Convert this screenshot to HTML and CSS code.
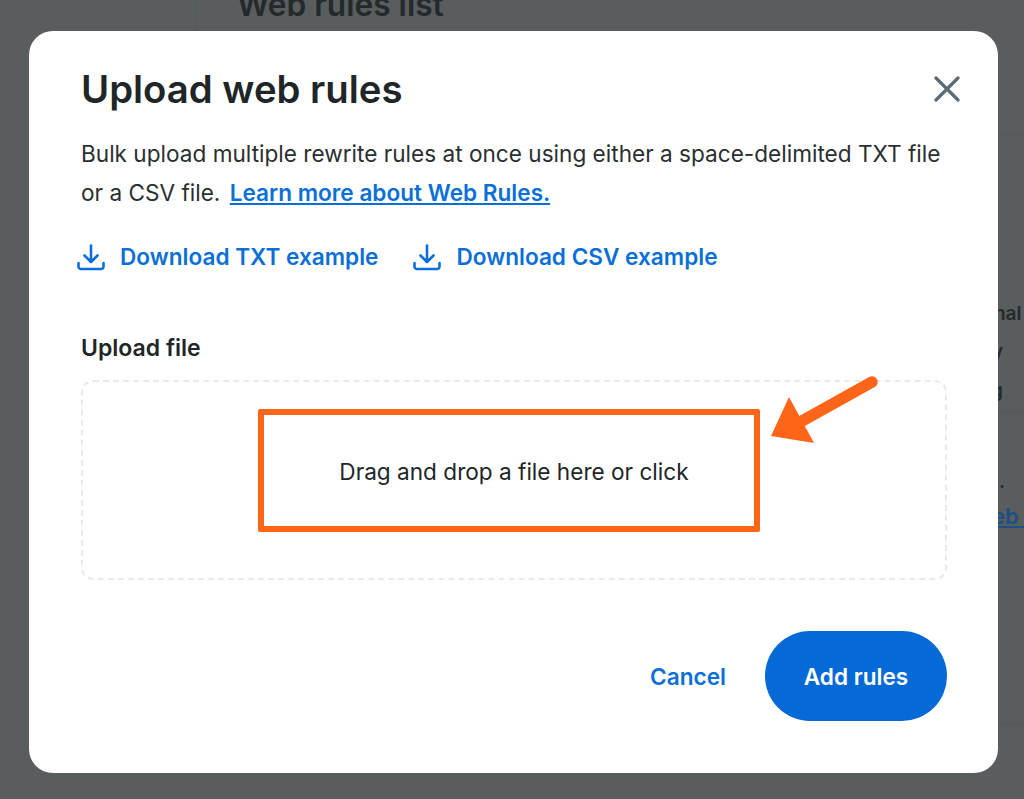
FILE: index.html
```html
<!DOCTYPE html>
<html lang="en">
<head>
<meta charset="utf-8">
<title>Upload web rules</title>
<link rel="stylesheet" href="styles.css">
</head>
<body>
<div class="page">
  <div class="page-divider"></div>
  <h2 class="page-title">Web rules list</h2>
  <div class="bg-line line-b"></div>
  <div class="bg-frag frag-nal">nal</div>
  <div class="bg-frag frag-y">y</div>
  <div class="bg-frag frag-g">g</div>
  <div class="bg-line line-a"></div>
  <div class="bg-frag frag-dot">.</div>
  <div class="bg-frag frag-eb">eb&nbsp;&nbsp;</div>
  <div class="bg-line line-c"></div>
  <div class="bg-line line-d"></div>
</div>
<div class="modal">
  <header class="modal-head">
    <h1 class="modal-title">Upload web rules</h1>
    <svg class="close" viewBox="0 0 26 26" width="26" height="26" aria-hidden="true"><path d="M2 2 24 24M24 2 2 24"/></svg>
  </header>
  <p class="intro">Bulk upload multiple rewrite rules at once using either a space-delimited TXT file or a CSV file. <a class="learn" href="#">Learn more about Web Rules.</a></p>
  <div class="downloads">
    <a class="dl" href="#">
      <svg class="dl-icon" viewBox="0 0 28 28" width="28" height="28" aria-hidden="true"><path d="M14 2.500V19M7.500 12.500 14 19l6.500-6.500M1.500 20v3.500a2.500 2.500 0 0 0 2.500 2.500h20a2.500 2.500 0 0 0 2.500-2.500V20"/></svg>
      <span>Download TXT example</span>
    </a>
    <a class="dl" href="#">
      <svg class="dl-icon" viewBox="0 0 28 28" width="28" height="28" aria-hidden="true"><path d="M14 2.500V19M7.500 12.500 14 19l6.500-6.500M1.500 20v3.500a2.500 2.500 0 0 0 2.500 2.500h20a2.500 2.500 0 0 0 2.500-2.500V20"/></svg>
      <span>Download CSV example</span>
    </a>
  </div>
  <div class="field-label">Upload file</div>
  <div class="dropzone">Drag and drop a file here or click</div>
  <footer class="actions">
    <a class="cancel" href="#">Cancel</a>
    <button class="primary" type="button">Add rules</button>
  </footer>
  <div class="callout-box"></div>
  <svg class="callout-arrow" viewBox="0 0 120 100" width="120" height="100" aria-hidden="true">
    <path class="arrow-shaft" d="M108 11 38 50"/>
    <path class="arrow-head" d="M7 65 25 26 50 72Z"/>
  </svg>
</div>
</body>
</html>
```
FILE: styles.css
```css
* { box-sizing: border-box; }
html, body { margin: 0; height: 100%; }
body {
  background: #595d5e;
  font-family: Inter, "Liberation Sans", sans-serif;
  color: #202628;
  overflow: hidden;
  padding: 31px 26px 26px 29px;
}
.page { position: absolute; inset: 0; overflow: hidden; color: #24292b; }
.page-divider { position: absolute; left: 196px; top: 0; width: 1px; height: 31px; background: #555a5b; }
.page-title { position: absolute; left: 237px; top: -15px; margin: 0; font-size: 31.700px; line-height: 40px; font-weight: 600; }
.bg-frag { position: absolute; left: 998px; font-size: 19px; line-height: 24px; white-space: nowrap; overflow: hidden; width: 26px; font-weight: 600; }
.frag-nal { top: 302px; text-indent: -4px; }
.frag-y { top: 340px; text-indent: -6px; }
.frag-g { top: 379px; text-indent: -7px; }
.frag-dot { top: 470px; text-indent: 1px; }
.frag-eb { top: 502px; font-size: 22px; line-height: 28px; color: #1b4f86; text-decoration: underline; text-indent: -6px; }
.bg-line { position: absolute; left: 998px; width: 26px; height: 1px; background: #54585a; }
.line-a { top: 411px; }
.line-b { top: 134px; }
.line-c { top: 685px; background: #575b5c; }
.line-d { top: 723px; }
.modal {
  position: relative;
  width: 969px;
  height: 742px;
  background: #fff;
  border-radius: 24px;
  padding: 35px 52px 0;
}
.modal-head { display: flex; justify-content: space-between; align-items: center; height: 46px; }
.modal-title { margin: 0; font-size: 38.300px; line-height: 46px; font-weight: 600; }
.close { fill: none; stroke: #5a6b75; stroke-width: 3.200; stroke-linecap: round; margin-right: -14px; }
.intro { margin: 22px 0 0; width: 870px; font-size: 22.600px; line-height: 39px; color: #2a2f31; }
.learn { margin-left: 3px; color: #0b6fd8; font-weight: 600; text-decoration: underline; }
.downloads { display: flex; gap: 35px; margin-top: 29px; margin-left: -4px; }
.dl { display: flex; align-items: center; gap: 15px; color: #0b6fd8; font-size: 22.600px; line-height: 32px; font-weight: 600; text-decoration: none; }
.dl-icon { fill: none; stroke: #0b6fd8; stroke-width: 2.600; stroke-linecap: round; stroke-linejoin: round; }
.field-label { margin-top: 61px; font-size: 23px; line-height: 28px; font-weight: 600; }
.dropzone {
  display: flex; align-items: center; justify-content: center;
  width: 866px; height: 200px; margin-top: 18px; padding-bottom: 18px;
  border: 2px dashed #e9ebeb; border-radius: 12px;
  font-size: 22.600px;
}
.actions { display: flex; justify-content: flex-end; align-items: center; gap: 39px; width: 866px; margin-top: 51px; }
.cancel { color: #0b6fd8; font-size: 22.600px; font-weight: 600; text-decoration: none; }
.primary {
  width: 182px; height: 90px; border: 0; border-radius: 45px;
  background: #056ad6; color: #fff;
  font: 600 22.600px Inter, "Liberation Sans", sans-serif;
}
.callout-box {
  position: absolute; left: 229px; top: 378px; width: 502px; height: 123px;
  border: 6.500px solid #ff6519; border-radius: 2px;
}
.callout-arrow { position: absolute; left: 735px; top: 340px; }
.arrow-shaft { fill: none; stroke: #ff6519; stroke-width: 11.500; stroke-linecap: round; }
.arrow-head { fill: #ff6519; }
```
